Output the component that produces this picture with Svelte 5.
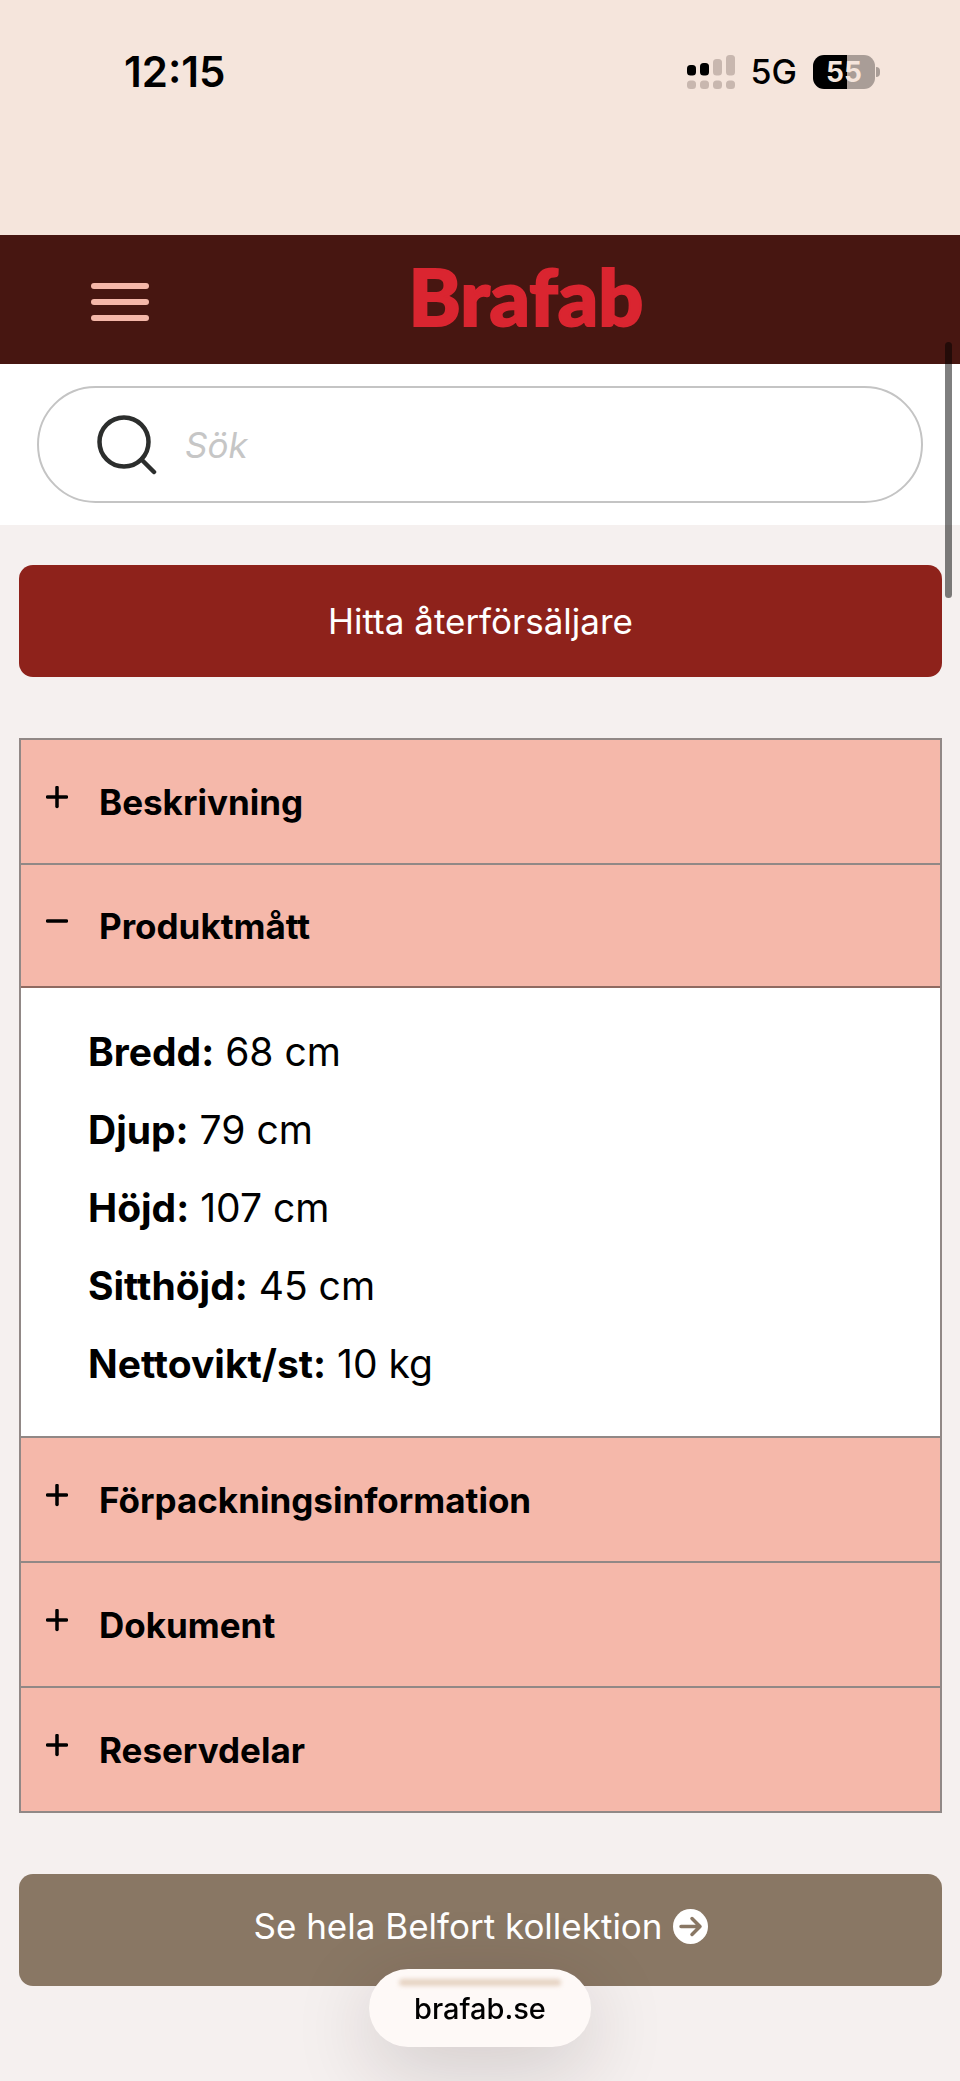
<script>
  let query = $state('');
  let openId = $state('matt');

  const sections = [
    { id: 'beskrivning', title: 'Beskrivning', rows: [] },
    {
      id: 'matt',
      title: 'Produktmått',
      rows: [
        { label: 'Bredd:', value: '68 cm' },
        { label: 'Djup:', value: '79 cm' },
        { label: 'Höjd:', value: '107 cm' },
        { label: 'Sitthöjd:', value: '45 cm' },
        { label: 'Nettovikt/st:', value: '10 kg' }
      ]
    },
    { id: 'forpackning', title: 'Förpackningsinformation', rows: [] },
    { id: 'dokument', title: 'Dokument', rows: [] },
    { id: 'reservdelar', title: 'Reservdelar', rows: [] }
  ];

  function toggle(id) {
    openId = openId === id ? '' : id;
  }
</script>

<div class="page">
  <div class="status-bar">
    <span class="time">12:15</span>
    <div class="status-right">
      <svg class="signal" width="48" height="34" viewBox="0 0 48 34" aria-hidden="true">
        <rect x="0" y="10" width="9" height="10.5" rx="3.5" />
        <rect x="13" y="8" width="9" height="12.5" rx="3.5" />
        <g fill="#c8b7af">
          <rect x="26" y="4" width="9" height="16.5" rx="3.5" />
          <rect x="39" y="0" width="9" height="20.5" rx="3.5" />
          <rect x="0" y="25.5" width="9" height="8.5" rx="3.5" />
          <rect x="13" y="25.5" width="9" height="8.5" rx="3.5" />
          <rect x="26" y="25.5" width="9" height="8.5" rx="3.5" />
          <rect x="39" y="25.5" width="9" height="8.5" rx="3.5" />
        </g>
      </svg>
      <span class="network">5G</span>
      <div class="battery">
        <span class="battery-level">55</span>
      </div>
    </div>
  </div>

  <header class="site-header">
    <button class="menu" type="button" aria-label="Meny">
      <span></span>
      <span></span>
      <span></span>
    </button>
    <a class="logo" href="#start">Brafab</a>
  </header>

  <form class="search" role="search" onsubmit={(e) => e.preventDefault()}>
    <label class="search-box">
      <svg width="60" height="60" viewBox="0 0 60 60" aria-hidden="true">
        <circle cx="27" cy="27" r="24.5" />
        <path d="M44.5 44.5 L57 57" />
      </svg>
      <input type="text" placeholder="Sök" aria-label="Sök" bind:value={query} />
    </label>
  </form>

  <main class="content">
    <a class="btn btn-red" href="#aterforsaljare">Hitta återförsäljare</a>

    <div class="accordion">
      {#each sections as section}
        <section class="item">
          <button
            class="item-header"
            class:open={openId === section.id}
            type="button"
            aria-expanded={openId === section.id}
            onclick={() => toggle(section.id)}
          >
            <svg width="22" height="32" viewBox="0 0 22 32" aria-hidden="true">
              <path d="M1.5 11 H20.5" />
              {#if openId !== section.id}
                <path d="M11 1.5 V20.5" />
              {/if}
            </svg>
            {section.title}
          </button>
          {#if openId === section.id && section.rows.length > 0}
            <div class="panel">
              {#each section.rows as row}
                <p><strong>{row.label}</strong> {row.value}</p>
              {/each}
            </div>
          {/if}
        </section>
      {/each}
    </div>

    <a class="btn btn-brown" href="#belfort">
      Se hela Belfort kollektion
      <svg width="35" height="35" viewBox="0 0 35 35" aria-hidden="true">
        <circle cx="17.5" cy="17.5" r="17.5" />
        <path d="M8 17.5 H27 M19 9.5 L27 17.5 L19 25.5" />
      </svg>
    </a>
  </main>

  <div class="scrollbar"></div>
  <button class="address" type="button">brafab.se</button>
</div>

<style>
  :global(body) {
    margin: 0;
    background: #f5f0ef;
  }

  .page {
    position: relative;
    min-height: 100vh;
    font-family: Inter, 'Liberation Sans', sans-serif;
    color: #000;
    background: #f5f0ef;
  }

  .page * {
    box-sizing: border-box;
  }

  .status-bar {
    display: flex;
    justify-content: space-between;
    align-items: center;
    padding: 42px 80px 133px 124px;
    background: #f5e5dc;
  }

  .time {
    font-size: 42px;
    font-weight: 600;
    line-height: 60px;
  }

  .status-right {
    display: flex;
    align-items: center;
    gap: 16px;
  }

  .network {
    font-size: 34px;
    font-weight: 500;
    line-height: 34px;
  }

  .battery {
    position: relative;
    width: 62px;
    height: 34px;
    margin-right: 5px;
    border-radius: 11px;
    background: linear-gradient(90deg, #000 55%, #a99d97 55%);
  }

  .battery::after {
    content: '';
    position: absolute;
    top: 12px;
    right: -5px;
    width: 4px;
    height: 10px;
    border-radius: 0 5px 5px 0;
    background: #a99d97;
  }

  .battery-level {
    display: block;
    font-size: 28px;
    font-weight: 700;
    line-height: 34px;
    text-align: center;
    color: #f5e5dc;
  }

  .site-header {
    display: flex;
    align-items: center;
    height: 129px;
    padding: 0 57px 0 91px;
    background: #471611;
  }

  .menu {
    display: flex;
    flex-direction: column;
    gap: 10px;
    width: 58px;
    padding: 4px 0 0;
    border: 0;
    background: none;
  }

  .menu span {
    height: 6px;
    border-radius: 3px;
    background: #f5b7a9;
  }

  .logo {
    flex: 1;
    padding-bottom: 8px;
    font-family: Lato, sans-serif;
    font-size: 79px;
    font-weight: 900;
    line-height: 96px;
    text-align: center;
    text-decoration: none;
    color: #da2530;
    -webkit-text-stroke: 2px #da2530;
  }

  .search {
    padding: 22px 37px;
    background: #fff;
  }

  .search-box {
    display: flex;
    align-items: center;
    gap: 28px;
    height: 117px;
    padding: 0 58px;
    border: 2px solid #c4c4c4;
    border-radius: 59px;
  }

  .search-box svg {
    flex: none;
    fill: none;
    stroke: #2c2e2d;
    stroke-width: 4.5;
    stroke-linecap: round;
  }

  .search-box input {
    flex: 1;
    min-width: 0;
    padding: 0;
    border: 0;
    outline: 0;
    font-family: inherit;
    font-size: 35px;
    font-style: italic;
    background: none;
  }

  .search-box input::placeholder {
    color: #c6c6c6;
    opacity: 1;
  }

  .content {
    padding: 40px 18px 95px 19px;
  }

  .btn {
    display: flex;
    justify-content: center;
    align-items: center;
    gap: 10px;
    height: 112px;
    border-radius: 14px;
    font-size: 35px;
    text-decoration: none;
    color: #fff;
  }

  .btn-red {
    background: #8e221b;
  }

  .btn-brown {
    padding-bottom: 8px;
    background: #897764;
  }

  .btn-brown circle {
    fill: #fff;
  }

  .btn-brown path {
    fill: none;
    stroke: #897764;
    stroke-width: 3.5;
    stroke-linecap: round;
    stroke-linejoin: round;
  }

  .accordion {
    margin: 61px 0;
    border: 2px solid #918886;
    border-bottom: 0;
  }

  .item {
    border-bottom: 2px solid #918886;
  }

  .item-header {
    display: flex;
    align-items: center;
    gap: 31px;
    width: 100%;
    min-height: 123px;
    padding: 0 25px;
    border: 0;
    font-family: inherit;
    font-size: 35px;
    font-weight: 700;
    text-align: left;
    color: #000;
    background: #f5b8aa;
  }

  .item-header.open {
    border-bottom: 2px solid #8f6a61;
  }

  .item-header svg {
    flex: none;
    fill: none;
    stroke: #000;
    stroke-width: 3.5;
    stroke-linecap: round;
  }

  .panel {
    padding: 25px 67px 33px;
    background: #fff;
  }

  .panel p {
    margin: 0;
    font-size: 39px;
    line-height: 78px;
  }

  .scrollbar {
    position: absolute;
    top: 342px;
    right: 8px;
    width: 7px;
    height: 256px;
    border-radius: 4px;
    background: rgba(0, 0, 0, 0.5);
  }

  .address {
    position: fixed;
    bottom: 34px;
    left: 50%;
    height: 78px;
    padding: 0 45px;
    border: 0;
    border-radius: 39px;
    font-family: inherit;
    font-size: 29px;
    font-weight: 500;
    color: #000;
    background: #fef9f7;
    box-shadow: 0 20px 80px rgba(40, 20, 30, 0.18);
    transform: translateX(-50%);
  }

  .address::before {
    content: '';
    position: absolute;
    top: 10px;
    left: 30px;
    right: 30px;
    height: 7px;
    border-radius: 4px;
    background: #e6d3c3;
    filter: blur(2px);
  }
</style>
